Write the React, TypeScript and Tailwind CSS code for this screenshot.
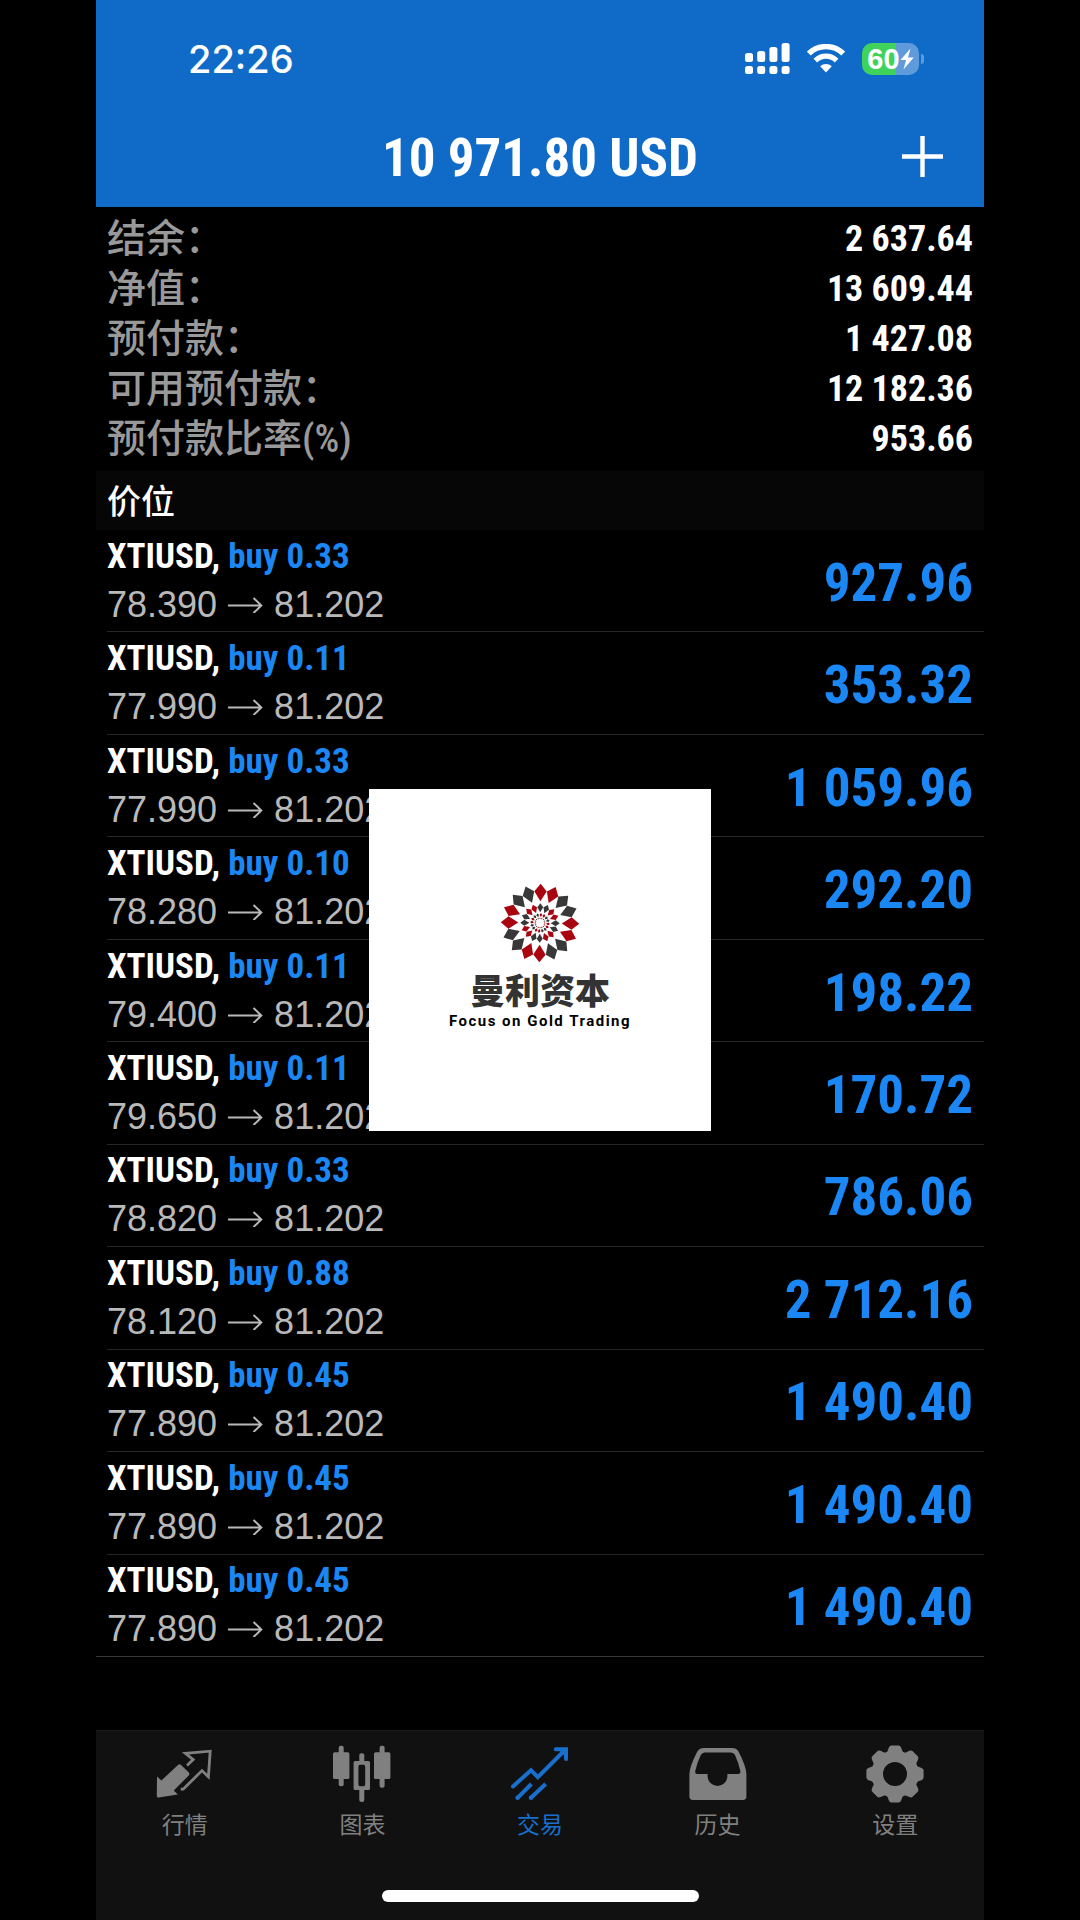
import React from "react";

type Position = { symbol: string; side: string; volume: string; open: string; current: string; profit: string };

const row = (volume: string, open: string, profit: string): Position => ({
  symbol: "XTIUSD",
  side: "buy",
  volume,
  open,
  current: "81.202",
  profit,
});

const positions: Position[] = [
  row("0.33", "78.390", "927.96"),
  row("0.11", "77.990", "353.32"),
  row("0.33", "77.990", "1 059.96"),
  row("0.10", "78.280", "292.20"),
  row("0.11", "79.400", "198.22"),
  row("0.11", "79.650", "170.72"),
  row("0.33", "78.820", "786.06"),
  row("0.88", "78.120", "2 712.16"),
  row("0.45", "77.890", "1 490.40"),
  row("0.45", "77.890", "1 490.40"),
  row("0.45", "77.890", "1 490.40"),
];

const summary = [
  ["结余：", "2 637.64"],
  ["净值：", "13 609.44"],
  ["预付款：", "1 427.08"],
  ["可用预付款：", "12 182.36"],
  ["预付款比率(%)", "953.66"],
];

function SignalIcon() {
  const tops = [10, 8, 4, 0];
  return (
    <svg width="45" height="32" viewBox="0 0 45 32" fill="#fff" aria-hidden="true">
      {tops.map((t, i) => (
        <g key={i}>
          <rect x={i * 12.2} y={t} width="8" height={19 - t} rx="2.5" />
          <rect x={i * 12.2} y="23" width="8" height="8" rx="2.5" />
        </g>
      ))}
    </svg>
  );
}

function WifiIcon() {
  return (
    <svg width="38" height="30" viewBox="0 0 38 30" fill="none" aria-hidden="true">
      <path d="M1.8 9.6 A24.5 24.5 0 0 1 36.2 9.6" stroke="#fff" strokeWidth="5.4" />
      <path d="M8.4 16.6 A15 15 0 0 1 29.6 16.6" stroke="#fff" strokeWidth="5.2" />
      <path d="M13.2 22.2 A8.4 8.4 0 0 1 24.8 22.2 L19 28.4 Z" fill="#fff" />
    </svg>
  );
}

function Battery() {
  return (
    <div className="flex items-center gap-[2px]">
      <div className="flex h-8 w-[57px] items-center justify-center rounded-[10px] bg-[linear-gradient(90deg,#40d35c_60%,#5f9bdb_60%)] text-white">
        <span className="font-['Liberation_Sans',sans-serif] text-[29px] leading-8 font-bold">60</span>
        <svg width="14" height="22" viewBox="0 0 14 22" fill="#fff" aria-hidden="true">
          <path d="M10.5 0.5 L0.5 12 H6 L3.5 21.5 L13.7 9.6 H8 Z" />
        </svg>
      </div>
      <div className="h-[10px] w-[3px] rounded-r-full bg-[#5f9bdb]" />
    </div>
  );
}

function ArrowRight() {
  return (
    <svg width="35" height="16" viewBox="0 0 35 16" fill="none" stroke="#b9b9b9" strokeWidth="2" aria-label="→">
      <path d="M0 8.5 H33 M25.5 1 L33.3 8.5 L25.5 16" />
    </svg>
  );
}

function ringPetals(radius: number, length: number, width: number, colors: string[], offset: number) {
  return Array.from({ length: 16 }, (_, i) => (
    <path
      key={radius + "-" + i}
      d={`M0 ${-radius - length / 2} L${width / 2} ${-radius - length * 0.06} L0 ${-radius + length / 2} L${-width / 2} ${-radius - length * 0.06} Z`}
      transform={`rotate(${i * 22.5 + offset})`}
      fill={colors[Math.floor(i / 2) % 2]}
    />
  ));
}

function Flower() {
  const red = "#a80510";
  const dark = "#383838";
  return (
    <svg width="80" height="80" viewBox="-40 -40 80 80" aria-hidden="true">
      {ringPetals(30.5, 17.5, 12.4, [red, dark], 1)}
      {ringPetals(15.2, 9, 6, [dark, red], 1)}
      {ringPetals(8, 4, 2.8, [red, dark], 6)}
      {ringPetals(4.7, 1.8, 1.3, [red, dark], 0)}
    </svg>
  );
}

function QuotesIcon() {
  return (
    <svg width="60" height="60" viewBox="0 0 60 60" aria-hidden="true">
      <path
        d="M2 32.5 L6.4 36.5 L23 21 Q24.6 19.6 26 21 L33.8 28.6 Q35 30 33.8 31.4 L18.8 46.6 L22.8 50.6 L3.6 53.6 Q1.8 53.8 1.8 52 Z"
        fill="currentColor"
      />
      <path d="M25.7 45.2 H28.2 L47 26.6 L53.4 32.8 L55.2 7.2 L30.4 9.4 L38.2 15.6 L32 21.6" fill="none" stroke="currentColor" strokeWidth="2.8" />
    </svg>
  );
}

function ChartIcon() {
  return (
    <svg width="60" height="60" viewBox="0 0 60 60" fill="currentColor" aria-hidden="true">
      <rect x="1" y="8.3" width="16.4" height="26.7" rx="1.6" />
      <rect x="6.7" y="1.7" width="5" height="40.6" rx="2" />
      <path fillRule="evenodd" d="M23.2 17 H36.4 Q38 17 38 18.6 V44.4 Q38 46 36.4 46 H23.2 Q21.6 46 21.6 44.4 V18.6 Q21.6 17 23.2 17 Z M28 20.8 Q26.4 20.8 26.4 23 V40 Q26.4 42.2 28 42.2 H31.6 Q33.2 42.2 33.2 40 V23 Q33.2 20.8 31.6 20.8 Z" />
      <rect x="27.3" y="9.3" width="5" height="10" rx="2" />
      <rect x="27.3" y="44" width="5" height="14" rx="2" />
      <rect x="42" y="8.3" width="16.4" height="26.7" rx="1.6" />
      <rect x="47.6" y="1.7" width="5" height="42" rx="2" />
    </svg>
  );
}

function TradeIcon() {
  return (
    <svg width="60" height="60" viewBox="0 0 60 60" fill="none" stroke="currentColor" strokeWidth="4" aria-hidden="true">
      <path d="M3 42.4 L21 26.2 L27.8 33.2 L54 7" strokeLinecap="round" />
      <path d="M45.8 3.2 H58 V15.4 Q58 17 56.2 17 Q54 17 54 15 V11 L50 7.2 H45.8 Q43.8 7 43.8 5.2 Q43.8 3.2 45.8 3.2 Z" fill="currentColor" stroke="none" />
      <path d="M7.6 53.8 L21.4 40" />
      <path d="M21 53.8 L35.6 40" />
      <path d="M7.6 53.8 h0.01 M21 53.8 h0.01" strokeLinecap="round" strokeWidth="4.6" />
    </svg>
  );
}

function HistoryIcon() {
  return (
    <svg width="60" height="60" viewBox="0 0 60 60" fill="currentColor" aria-hidden="true">
      <path
        fillRule="evenodd"
        d="M16 4 H44 Q49 4 51 8.4 Q58.4 23 58.4 30 V52.6 Q58.4 56 55 56 H4.8 Q1.4 56 1.4 52.6 V30 Q1.4 23 8.8 8.4 Q11 4 16 4 Z M16.8 8.4 Q14 8.4 12.8 11 Q8.8 19.4 7.2 27.2 Q6.8 30 9.4 30 H19.6 V32 A9.9 9.9 0 0 0 39.4 32 V30 H50 Q53 30 52.4 27.2 Q50.8 19.4 47 11 Q45.8 8.4 43 8.4 Z"
      />
    </svg>
  );
}

function SettingsIcon() {
  return (
    <svg width="60" height="60" viewBox="-30 -30 60 60" aria-hidden="true">
      <circle r="17.8" fill="none" stroke="currentColor" strokeWidth="11.6" />
      {Array.from({ length: 8 }, (_, i) => (
        <path
          key={i}
          transform={`rotate(${i * 45})`}
          d="M-9.6 -19 Q-8 -21.4 -7 -24 Q-5.8 -28.6 -3.6 -28.6 H3.6 Q5.8 -28.6 7 -24 Q8 -21.4 9.6 -19 Z"
          fill="currentColor"
        />
      ))}
    </svg>
  );
}

const tabs = [
  { label: "行情", Icon: QuotesIcon, active: false },
  { label: "图表", Icon: ChartIcon, active: false },
  { label: "交易", Icon: TradeIcon, active: true },
  { label: "历史", Icon: HistoryIcon, active: false },
  { label: "设置", Icon: SettingsIcon, active: false },
];

export default function App() {
  return (
    <div className="relative min-h-screen bg-black font-['Roboto_Condensed','Noto_Sans_CJK_SC',sans-serif] text-white">
      <div className="mx-auto flex min-h-screen w-full max-w-[888px] flex-col">
        <header className="bg-[#106bc8] pb-[13px]">
          <div className="flex h-[118px] items-center justify-between pr-[60px] pl-[92px]">
            <span className="font-['Inter','Liberation_Sans',sans-serif] text-[38px] leading-10 font-medium">22:26</span>
            <div className="flex items-center gap-[17px]">
              <SignalIcon />
              <WifiIcon />
              <Battery />
            </div>
          </div>
          <div className="grid h-[76px] grid-cols-[1fr_auto_1fr] items-center pr-[41px] pl-[41px]">
            <h1 className="col-start-2 pt-1 text-[53px] leading-[72px] font-bold">10 971.80 USD</h1>
            <button type="button" aria-label="新订单" className="justify-self-end">
              <svg width="41" height="41" viewBox="0 0 41 41" stroke="#fff" strokeWidth="4.4" aria-hidden="true">
                <path d="M20.5 0 V41 M0 20.5 H41" />
              </svg>
            </button>
          </div>
        </header>

        <dl className="py-[7px]">
          {summary.map(([label, value]) => (
            <div key={label} className="flex h-[50px] items-center justify-between px-[11px]">
              <dt className="text-[39px] leading-[50px] font-medium text-[#999]">{label}</dt>
              <dd className="text-[36px] leading-[50px] font-bold">{value}</dd>
            </div>
          ))}
        </dl>

        <h2 className="bg-[#060606] pt-1 pl-[11px] text-[34px] leading-[55px] font-medium">价位</h2>

        <ul className="flex flex-1 flex-col border-b border-[#3a3a3a]">
          {positions.map((p, i) => (
            <li key={i} className="group flex flex-1 pl-[11px]">
              <div className="flex flex-1 items-center justify-between border-b border-[#262626] pr-[11px] group-last:border-b-0">
                <div>
                  <div className="text-[35px] leading-[48px] font-bold">
                    {p.symbol}, <span className="text-[#1b87f5]">{p.side} {p.volume}</span>
                  </div>
                  <div className="flex items-center gap-[11px] font-['Liberation_Sans',sans-serif] text-[36px] leading-[48px] text-[#b9b9b9]">
                    <span>{p.open}</span>
                    <ArrowRight />
                    <span>{p.current}</span>
                  </div>
                </div>
                <div className="pt-1 text-[53px] leading-[60px] font-bold text-[#1b87f5]">{p.profit}</div>
              </div>
            </li>
          ))}
        </ul>

        <nav className="mt-[73px] h-[190px] border-t border-[#1a1a1a] bg-[#111] pt-[13px]">
          <div className="grid grid-cols-5">
            {tabs.map(({ label, Icon, active }) => (
              <button
                key={label}
                type="button"
                aria-current={active ? "page" : undefined}
                className={active ? "flex flex-col items-center gap-2 text-[#186fcd]" : "flex flex-col items-center gap-2 text-[#808080]"}
              >
                <Icon />
                <span className="text-[23px] leading-7">{label}</span>
              </button>
            ))}
          </div>
          <div className="mx-auto mt-[50px] h-3 w-[317px] rounded-full bg-white" />
        </nav>
      </div>

      <div className="absolute inset-0 m-auto flex h-[342px] w-[342px] flex-col items-center bg-white pt-[94px]">
        <Flower />
        <div className="mt-3 text-[35px] leading-[35px] font-black text-[#333]">曼利资本</div>
        <div className="font-['Roboto',sans-serif] text-[15px] leading-[22px] font-bold tracking-widest text-black">Focus on Gold Trading</div>
      </div>
    </div>
  );
}
